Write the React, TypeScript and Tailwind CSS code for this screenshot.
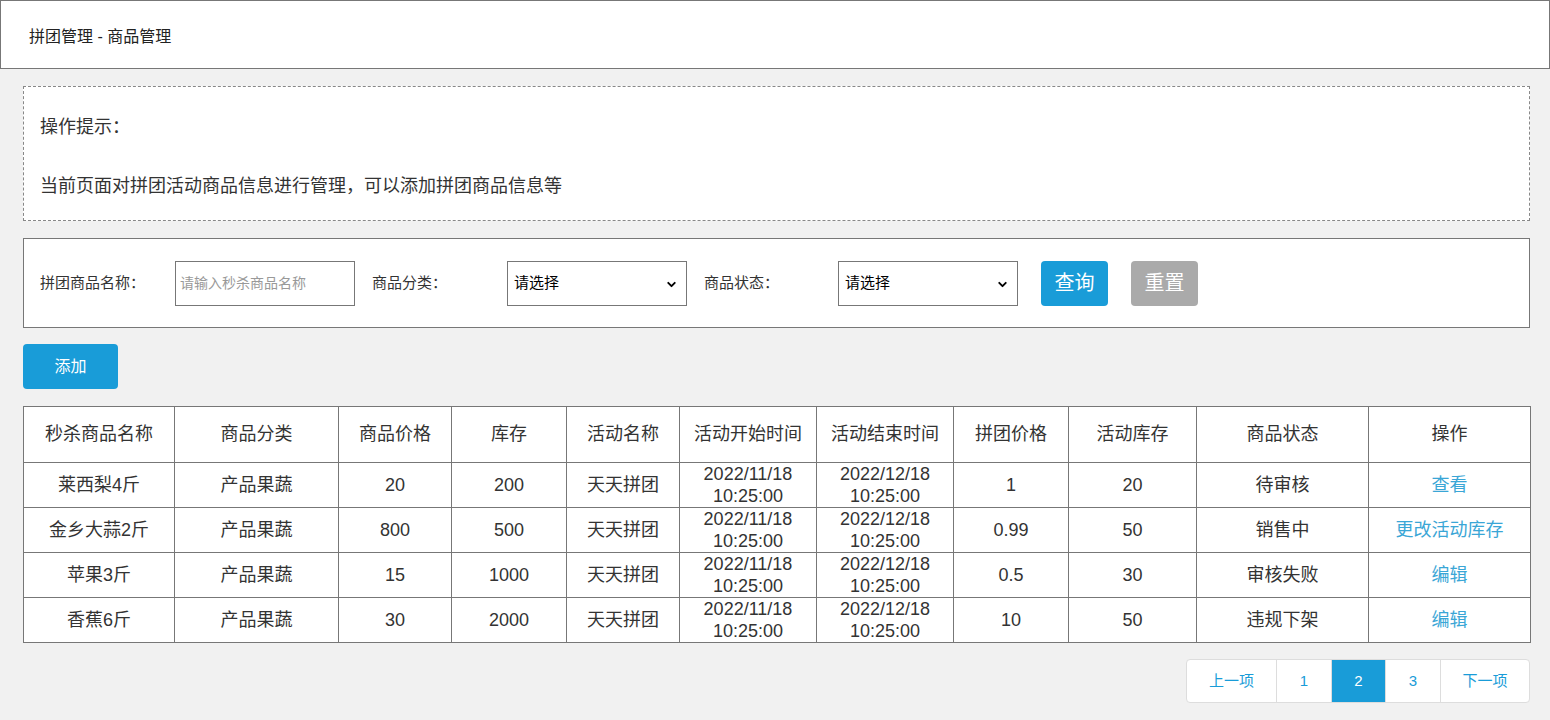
import { ChevronDown } from "lucide-react";

const FONT = "font-['Liberation_Sans','Noto_Sans_CJK_SC',sans-serif]";

const COLS: { label: string; w: number }[] = [
  { label: "秒杀商品名称", w: 151 },
  { label: "商品分类", w: 164 },
  { label: "商品价格", w: 113 },
  { label: "库存", w: 115 },
  { label: "活动名称", w: 113 },
  { label: "活动开始时间", w: 137 },
  { label: "活动结束时间", w: 137 },
  { label: "拼团价格", w: 115 },
  { label: "活动库存", w: 128 },
  { label: "商品状态", w: 172 },
  { label: "操作", w: 162 },
];

const ROWS = [
  { name: "莱西梨4斤", price: "20", stock: "200", gp: "1", gs: "20", status: "待审核", op: "查看" },
  { name: "金乡大蒜2斤", price: "800", stock: "500", gp: "0.99", gs: "50", status: "销售中", op: "更改活动库存" },
  { name: "苹果3斤", price: "15", stock: "1000", gp: "0.5", gs: "30", status: "审核失败", op: "编辑" },
  { name: "香蕉6斤", price: "30", stock: "2000", gp: "10", gs: "50", status: "违规下架", op: "编辑" },
];

function Select() {
  return (
    <div className="relative w-[180px] h-[45px] border border-[#777] bg-white flex items-center pl-[6px]">
      <span className="text-[15px] text-black">请选择</span>
      <ChevronDown size={13} strokeWidth={3.5} className="absolute right-[8px] top-[16px] text-black" />
    </div>
  );
}

export default function App() {
  return (
    <div className={`${FONT} bg-[#f1f1f1] min-h-[720px] text-[#333]`}>
      <div className="h-[69px] bg-white border border-[#777] flex items-center pl-[28px] pt-[4px] text-[16px] text-[#222]">
        拼团管理 - 商品管理
      </div>

      <div className="ml-[23px] mr-[20px]">
        <div className="mt-[17px] h-[135px] bg-white border border-dashed border-[#888] pl-[16px] pt-[28px] text-[18px] leading-[24px]">
          <p>操作提示：</p>
          <p className="mt-[35px]">当前页面对拼团活动商品信息进行管理，可以添加拼团商品信息等</p>
        </div>

        <div className="mt-[17px] h-[90px] bg-white border border-[#777] flex items-center pl-[16px] text-[15px]">
          <span className="w-[135px]">拼团商品名称：</span>
          <div className="w-[180px] h-[45px] border border-[#777] flex items-center pl-[4px] text-[14px] text-[#999]">
            请输入秒杀商品名称
          </div>
          <span className="w-[135px] ml-[17px]">商品分类：</span>
          <Select />
          <span className="w-[134px] ml-[17px]">商品状态：</span>
          <Select />
          <button className="ml-[23px] w-[67px] h-[45px] rounded-[4px] bg-[#199cd8] text-white text-[20px]">查询</button>
          <button className="ml-[23px] w-[67px] h-[45px] rounded-[4px] bg-[#aaaaaa] text-white text-[20px]">重置</button>
        </div>

        <button className="mt-[16px] w-[95px] h-[45px] rounded-[4px] bg-[#199cd8] text-white text-[16px] block">添加</button>

        <table className="mt-[17px] w-[1507px] table-fixed border-collapse bg-white text-[18px] text-center">
          <colgroup>
            {COLS.map((c) => (
              <col key={c.label} style={{ width: c.w }} />
            ))}
          </colgroup>
          <thead>
            <tr className="h-[56px]">
              {COLS.map((c) => (
                <th key={c.label} className="border border-[#777] font-normal">
                  {c.label}
                </th>
              ))}
            </tr>
          </thead>
          <tbody>
            {ROWS.map((r) => (
              <tr key={r.name} className="h-[45px]">
                <td className="border border-[#777]">{r.name}</td>
                <td className="border border-[#777]">产品果蔬</td>
                <td className="border border-[#777]">{r.price}</td>
                <td className="border border-[#777]">{r.stock}</td>
                <td className="border border-[#777]">天天拼团</td>
                <td className="border border-[#777] leading-[22px]">
                  2022/11/18
                  <br />
                  10:25:00
                </td>
                <td className="border border-[#777] leading-[22px]">
                  2022/12/18
                  <br />
                  10:25:00
                </td>
                <td className="border border-[#777]">{r.gp}</td>
                <td className="border border-[#777]">{r.gs}</td>
                <td className="border border-[#777]">{r.status}</td>
                <td className="border border-[#777] text-[#3aa6d6]">{r.op}</td>
              </tr>
            ))}
          </tbody>
        </table>

        <div className="mt-[16px] flex justify-end">
          <div className="flex h-[44px] border border-[#ddd] rounded-[4px] bg-white overflow-hidden text-[15px] text-[#199cd8]">
            <span className="w-[89px] flex items-center justify-center">上一项</span>
            <span className="w-[55px] flex items-center justify-center border-l border-[#ddd]">1</span>
            <span className="w-[54px] flex items-center justify-center border-l border-[#ddd] bg-[#199cd8] text-white">2</span>
            <span className="w-[55px] flex items-center justify-center border-l border-[#ddd]">3</span>
            <span className="w-[89px] flex items-center justify-center border-l border-[#ddd]">下一项</span>
          </div>
        </div>
      </div>
    </div>
  );
}
